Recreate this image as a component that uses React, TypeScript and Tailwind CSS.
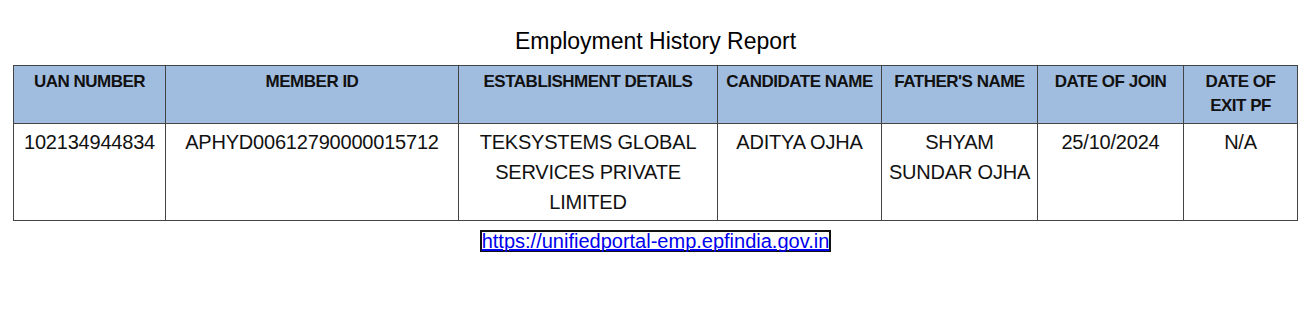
import React from "react";

const headers = [
  { label: "UAN NUMBER", w: "w-[152px]" },
  { label: "MEMBER ID", w: "w-[293px]" },
  { label: "ESTABLISHMENT DETAILS", w: "w-[259px]" },
  { label: "CANDIDATE NAME", w: "w-[164px]" },
  { label: "FATHER'S NAME", w: "w-[156px]" },
  { label: "DATE OF JOIN", w: "w-[146px]" },
  { label: "DATE OF EXIT PF", w: "w-[114px]" },
];

const row = [
  "102134944834",
  "APHYD00612790000015712",
  "TEKSYSTEMS GLOBAL SERVICES PRIVATE LIMITED",
  "ADITYA OJHA",
  "SHYAM SUNDAR OJHA",
  "25/10/2024",
  "N/A",
];

const App = () => {
  return (
    <div className="w-[1316px] h-[332px] bg-white font-['Liberation_Sans',Arial,sans-serif] text-[#111]">
      <div className="ml-[13px] w-[1285px] pt-[26px]">
        <h1 className="text-center text-[23px] leading-[30px] mb-[9px] text-black">
          Employment History Report
        </h1>
        <table className="table-fixed border-collapse w-[1285px]">
          <thead>
            <tr className="bg-[#a0bcdf]">
              {headers.map((h, i) => (
                <th
                  key={i}
                  className={`${h.w} border border-[#444] align-top text-center font-bold text-[17px] tracking-[-0.5px] leading-[24px] pt-[4px] pb-[5px] px-[6px]`}
                >
                  {h.label}
                </th>
              ))}
            </tr>
          </thead>
          <tbody>
            <tr>
              {row.map((cell, i) => (
                <td
                  key={i}
                  className="border border-[#444] align-top text-center text-[20px] tracking-[-0.2px] leading-[30px] pt-[3px] pb-[3px] px-[6px]"
                >
                  {cell}
                </td>
              ))}
            </tr>
          </tbody>
        </table>
        <div className="text-center mt-[9px]">
          <a
            href="#"
            className="inline-block h-[22px] border-2 border-[#111] px-0 text-[20px] leading-[18px] text-[#0000ee] underline"
          >
            https://unifiedportal-emp.epfindia.gov.in
          </a>
        </div>
      </div>
    </div>
  );
};

export default App;
